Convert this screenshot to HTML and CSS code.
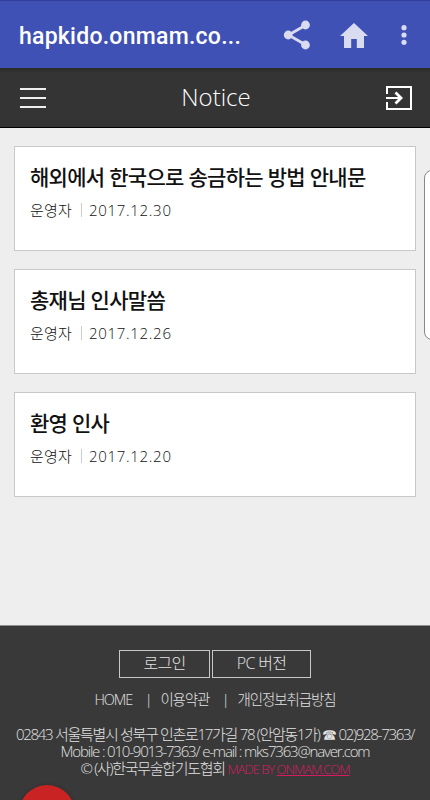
FILE: index.html
```
<!DOCTYPE html>
<html lang="ko">
<head>
<meta charset="utf-8">
<title>Notice</title>
<link rel="stylesheet" href="styles.css">
</head>
<body>
<div class="screen">
  <header class="appbar">
    <div class="url">hapkido.onmam.co...</div>
    <svg class="share" viewBox="0 0 28 30"><path d="M22.5 5.2 5.5 15l17 9.8" fill="none" stroke="currentColor" stroke-width="2.8"/><circle cx="22.5" cy="5" r="4.4" fill="currentColor"/><circle cx="5.2" cy="15" r="4.4" fill="currentColor"/><circle cx="22.5" cy="25" r="4.4" fill="currentColor"/></svg>
    <svg class="home" viewBox="0 0 28 25"><path d="M14 0 0 13h4v12h7.2v-9h5.6v9H24V13h4Z" fill="currentColor"/></svg>
    <svg class="more" viewBox="0 0 6 20"><g fill="currentColor"><circle cx="3" cy="2.7" r="2.6"/><circle cx="3" cy="10" r="2.6"/><circle cx="3" cy="17.3" r="2.6"/></g></svg>
  </header>
  <nav class="navbar">
    <div class="burger"><i></i><i></i><i></i></div>
    <h1>Notice</h1>
    <svg class="login" viewBox="0 0 26 24"><path d="M1 8V1h24v22H1v-7M0 12h14" fill="none" stroke="#fff" stroke-width="2"/><path d="M9.5 6.5 15 12l-5.5 5.5" fill="none" stroke="#fff" stroke-width="2.8"/></svg>
  </nav>
  <main class="list">
    <article class="card"><h2>해외에서 한국으로 송금하는 방법 안내문</h2><p><span class="author">운영자</span><span class="date">2017.12.30</span></p></article>
    <article class="card"><h2>총재님 인사말씀</h2><p><span class="author">운영자</span><span class="date">2017.12.26</span></p></article>
    <article class="card"><h2>환영 인사</h2><p><span class="author">운영자</span><span class="date">2017.12.20</span></p></article>
  </main>
  <footer class="footer">
    <div class="buttons"><a class="btn b1">로그인</a><a class="btn b2">PC 버전</a></div>
    <div class="links"><a>HOME</a><a>이용약관</a><a>개인정보취급방침</a></div>
    <address>
      <div class="l1">02843 서울특별시 성북구 인촌로17가길 78 (안암동1가) <span class="tel">☎</span> 02)928-7363/</div>
      <div class="l2">Mobile : 010-9013-7363/ e-mail : mks7363@naver.com</div>
      <div class="l3">© (사)한국무술합기도협회 <span class="made">MADE BY <u>ONMAM.COM</u></span></div>
    </address>
  </footer>
  <div class="handle"></div>
  <div class="fab"></div>
</div>
</body>
</html>
```
FILE: styles.css
```
* { box-sizing: border-box; margin: 0; padding: 0; }
body { font-family: "Open Sans", "Noto Sans CJK KR", sans-serif; background: #eee; }
.screen { position: relative; width: 430px; height: 800px; overflow: hidden; display: flex; flex-direction: column; }
.appbar { height: 68px; flex: none; background: #3f51b5; border-top: 1px solid #303f9f; display: flex; align-items: center; padding: 1px 23px 0 19px; color: #d9dcf0; }
.url { flex: 1; font: 500 23px/30px Roboto, sans-serif; letter-spacing: .25px; padding-top: 3px; color: #fff; white-space: nowrap; }
.share { width: 28px; height: 30px; margin-right: 29px; }
.home { width: 28px; height: 25px; margin-right: 33px; }
.more { width: 6px; height: 20px; }
.navbar { height: 60px; flex: none; background: linear-gradient(#2a2a2a, #343434 5px); border-bottom: 1px solid #000; display: flex; align-items: center; justify-content: space-between; padding: 0 18px 0 20px; }
.burger { width: 26px; height: 20px; display: flex; flex-direction: column; justify-content: space-between; }
.burger i { height: 2px; background: #eee; }
h1 { font-size: 24px; font-weight: 300; line-height: 32px; padding-bottom: 2px; color: #fff; }
.login { width: 26px; height: 24px; }
.list { flex: none; height: 497px; padding: 18px 14px; display: flex; flex-direction: column; gap: 18px; }
.card { height: 105px; flex: none; background: #fff; border: 1px solid #c8c8c8; padding: 15px 15px 0; }
h2 { font-size: 21px; font-weight: 500; line-height: 30px; letter-spacing: -.7px; color: #111; white-space: nowrap; }
.card p { display: flex; align-items: center; height: 36px; font-size: 15px; font-weight: 300; color: #111; }
.author { letter-spacing: .2px; width: 52px; height: 14px; line-height: 14px; border-right: 1px solid #ccc; }
.date { padding-left: 7px; line-height: 14px; letter-spacing: .7px; }
.footer { flex: 1; background: #393939; border-top: 1px solid #8a908e; color: #e2e2e2; font-weight: 300; padding-top: 24px; }
.buttons { display: flex; gap: 2px; justify-content: center; }
.btn { height: 28px; border: 1px solid #c8c8c8; font-size: 16px; line-height: 25px; letter-spacing: -.7px; text-align: center; }
.b1 { width: 91px; }
.b2 { width: 99px; }
.links { display: flex; justify-content: center; margin-top: 11px; font-size: 14.5px; line-height: 22px; letter-spacing: -1.1px; }
.links a + a::before { content: "|"; margin: 0 9px 0 12.5px; }
address { font-style: normal; font-size: 15px; line-height: 17px; letter-spacing: -1.3px; text-align: center; white-space: nowrap; margin-top: 15px; }
.l2 { letter-spacing: -1.18px; }
.made { color: #d81b60; font-size: 13px; letter-spacing: -1px; }
.tel { font-family: "DejaVu Sans", sans-serif; line-height: 1; }
.handle { position: absolute; left: 424px; top: 170px; width: 20px; height: 170px; background: #fff; border: 1px solid #888; border-radius: 8px; }
.fab { position: absolute; left: 19px; top: 785px; width: 56px; height: 56px; border-radius: 50%; background: #c92323; box-shadow: 0 1px 4px #0005; }
```
